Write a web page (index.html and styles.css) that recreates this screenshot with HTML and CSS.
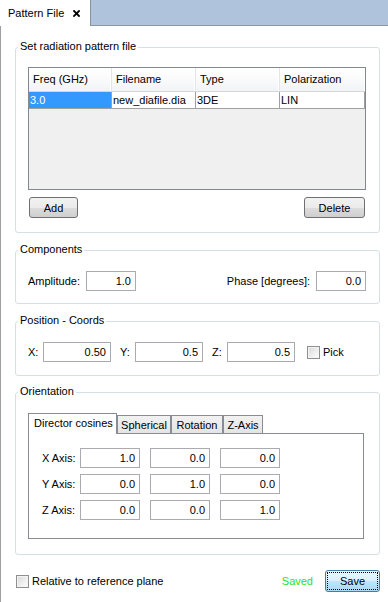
FILE: index.html
```html
<!DOCTYPE html>
<html>
<head>
<meta charset="utf-8">
<link rel="stylesheet" href="styles.css">
</head>
<body>
<div class="window">
  <div class="tabbar">
    <div class="doc-tab">
      <span>Pattern File</span>
      <svg class="close" width="7" height="7" viewBox="0 0 7 7"><path d="M1 1L6 6M6 1L1 6" stroke="#000" stroke-width="1.8" stroke-linecap="square"/></svg>
    </div>
    <div class="tabbar-fill"></div>
  </div>

  <div class="panel">
    <div class="group g1">
      <div class="group-title">Set radiation pattern file</div>
      <div class="table">
        <div class="thead">
          <div class="th">Freq (GHz)</div>
          <div class="th">Filename</div>
          <div class="th">Type</div>
          <div class="th">Polarization</div>
        </div>
        <div class="trow">
          <div class="td selected">3.0</div>
          <div class="td">new_diafile.dia</div>
          <div class="td">3DE</div>
          <div class="td">LIN</div>
        </div>
      </div>
      <div class="btn-row">
        <button class="btn btn-add">Add</button>
        <button class="btn btn-delete">Delete</button>
      </div>
    </div>

    <div class="group g2">
      <div class="group-title">Components</div>
      <div class="comp-row">
        <div class="pair-wide">
          <span>Amplitude:</span>
          <div class="field w50">1.0</div>
        </div>
        <div class="pair-wide">
          <span>Phase [degrees]:</span>
          <div class="field w50">0.0</div>
        </div>
      </div>
    </div>

    <div class="group g3">
      <div class="group-title">Position - Coords</div>
      <div class="coord-row">
        <span class="coord-label">X:</span>
        <div class="field w68">0.50</div>
        <span class="coord-label sp">Y:</span>
        <div class="field w68">0.5</div>
        <span class="coord-label sp">Z:</span>
        <div class="field w68">0.5</div>
        <span class="check pick-check"></span>
        <span class="pick-label">Pick</span>
      </div>
    </div>

    <div class="group g4">
      <div class="group-title">Orientation</div>
      <div class="tabstrip">
        <div class="tab active t-dir">Director cosines</div>
        <div class="tab t-sph">Spherical</div>
        <div class="tab t-rot">Rotation</div>
        <div class="tab t-z">Z-Axis</div>
      </div>
      <div class="tabpanel">
        <div class="axis-grid">
          <span class="axis-label">X Axis:</span>
          <div class="field w60">1.0</div>
          <div class="field w60">0.0</div>
          <div class="field w60">0.0</div>
          <span class="axis-label">Y Axis:</span>
          <div class="field w60">0.0</div>
          <div class="field w60">1.0</div>
          <div class="field w60">0.0</div>
          <span class="axis-label">Z Axis:</span>
          <div class="field w60">0.0</div>
          <div class="field w60">0.0</div>
          <div class="field w60">1.0</div>
        </div>
      </div>
    </div>

    <div class="footer">
      <span class="check"></span>
      <span class="rel-label">Relative to reference plane</span>
      <span class="saved">Saved</span>
      <button class="btn-save">Save</button>
    </div>
  </div>
</div>
</body>
</html>
```

FILE: styles.css
```css
* { box-sizing: border-box; }
html, body { margin: 0; padding: 0; }
body {
  width: 388px;
  height: 602px;
  overflow: hidden;
  background: #fff;
  font: 11px "Liberation Sans", Arial, sans-serif;
  color: #000;
}
.window { height: 602px; display: flex; flex-direction: column; }

/* document tab bar */
.tabbar { display: flex; height: 26px; background: #afc3dd; }
.doc-tab {
  width: 91px;
  height: 26px;
  background: #fff;
  border-right: 1px solid #8a8f98;
  display: flex;
  align-items: center;
  padding-left: 8px;
}
.doc-tab .close { margin-left: 9px; margin-top: 0px; }
.tabbar-fill { flex: 1; border-bottom: 1px solid #8d96a4; }

.panel {
  flex: 1;
  border-left: 1px solid #a0a0a0;
  display: flex;
  flex-direction: column;
}

/* group boxes */
.group {
  position: relative;
  border: 1px solid #d5dfe5;
  border-radius: 3px;
  margin: 0 8px 0 14px;
  padding: 20px 13px 12px 12px;
}
.group-title {
  position: absolute;
  top: -8px;
  left: 2px;
  padding: 0 2px;
  line-height: 13px;
  background: #fff;
  white-space: nowrap;
}
.g1 { margin-top: 21px; padding-top: 19px; padding-bottom: 14px; }
.g2 { margin-top: 17px; }
.g3 { margin-top: 17px; padding-bottom: 13px; }
.g4 { margin-top: 16px; padding-bottom: 15px; }

/* table */
.table {
  width: 338px;
  height: 123px;
  border: 1px solid #828790;
  background: #f0f0f0;
}
.thead, .trow { display: grid; grid-template-columns: 83px 84px 84px 85px; }
.th {
  height: 24px;
  line-height: 23px;
  padding-left: 4px;
  background: linear-gradient(#ffffff 0%, #fbfbfc 45%, #f2f3f5 100%);
  border-right: 1px solid #e2e4e7;
  border-bottom: 1px solid #d5d6d8;
  box-shadow: inset -1px 0 0 #ffffff;
}
.th:last-child { border-right: none; }
.td {
  height: 17px;
  line-height: 16px;
  padding-left: 1px;
  background: #fff;
  border-right: 1px solid #a0a0a0;
  border-bottom: 1px solid #a0a0a0;
  white-space: nowrap;
  overflow: hidden;
}
.td:last-child { border-right: 1px solid #a0a0a0; }
.td.selected { background: #3399ff; color: #fff; }

.btn-row { display: flex; justify-content: space-between; margin-top: 7px; padding-left: 1px; padding-right: 1px; }
.btn {
  height: 21px;
  border: 1px solid #707070;
  border-radius: 3px;
  background: linear-gradient(#f2f2f2 0%, #ebebeb 50%, #dddddd 50%, #cfcfcf 100%);
  font: inherit;
  color: #000;
  padding: 0;
}
.btn-add { width: 49px; }
.btn-delete { width: 61px; }

/* fields */
.field {
  height: 20px;
  border: 1px solid #a9abb0;
  background: #fff;
  text-align: right;
  padding-right: 4px;
  line-height: 18px;
}
.w50 { width: 50px; }
.w68 { width: 68px; }
.w60 { width: 60px; }

.comp-row { display: flex; justify-content: space-between; }
.pair-wide { display: flex; align-items: center; gap: 6px; }

.coord-row { display: flex; align-items: center; }
.coord-label { width: 15px; }
.coord-label.sp { margin-left: 9px; }
.pick-check { margin-left: 12px; }
.pick-label { margin-left: 3px; }

.check {
  width: 13px;
  height: 13px;
  border: 1px solid #8f8f8f;
  background: linear-gradient(135deg, #d8d8d8 0%, #f0f0f0 60%, #fdfdfd 100%);
  box-shadow: inset 0 0 0 1px #f4f4f4;
  flex: none;
}

/* tabs */
.tabstrip {
  display: flex;
  align-items: flex-end;
  height: 21px;
  margin-bottom: -1px;
}
.tab {
  position: relative;
  height: 19px;
  border: 1px solid #898c95;
  background: linear-gradient(#f2f2f2, #e4e4e4);
  text-align: center;
  line-height: 18px;
  white-space: nowrap;
}
.tab.active {
  height: 21px;
  border-bottom: none;
  background: #fff;
  z-index: 1;
  line-height: 19px;
  text-align: left;
  padding-left: 5px;
}
.t-dir { width: 89px; }
.t-sph { width: 54px; }
.t-rot { width: 52px; }
.t-z { width: 40px; }

.tabpanel {
  width: 336px;
  height: 106px;
  border: 1px solid #898c95;
  padding: 14px 13px;
}
.axis-grid {
  display: grid;
  grid-template-columns: 38px 70px 70px 60px;
  row-gap: 6px;
  align-items: center;
}
.axis-label { white-space: nowrap; }

/* footer */
.footer {
  display: flex;
  align-items: center;
  height: 22px;
  margin: 15px 8px 0 15px;
}
.rel-label { margin-left: 3px; flex: 1; }
.saved { color: #22e322; margin-right: 12px; }
.btn-save {
  width: 55px;
  height: 22px;
  border: 1px solid #3c7fb1;
  border-radius: 3px;
  background: linear-gradient(#eaf6fd 0%, #d9f0fc 50%, #bee6fd 50%, #a7d9f5 100%);
  font: inherit;
  color: #000;
  padding: 0;
  outline: 1px dotted #000;
  outline-offset: -3px;
}
```
